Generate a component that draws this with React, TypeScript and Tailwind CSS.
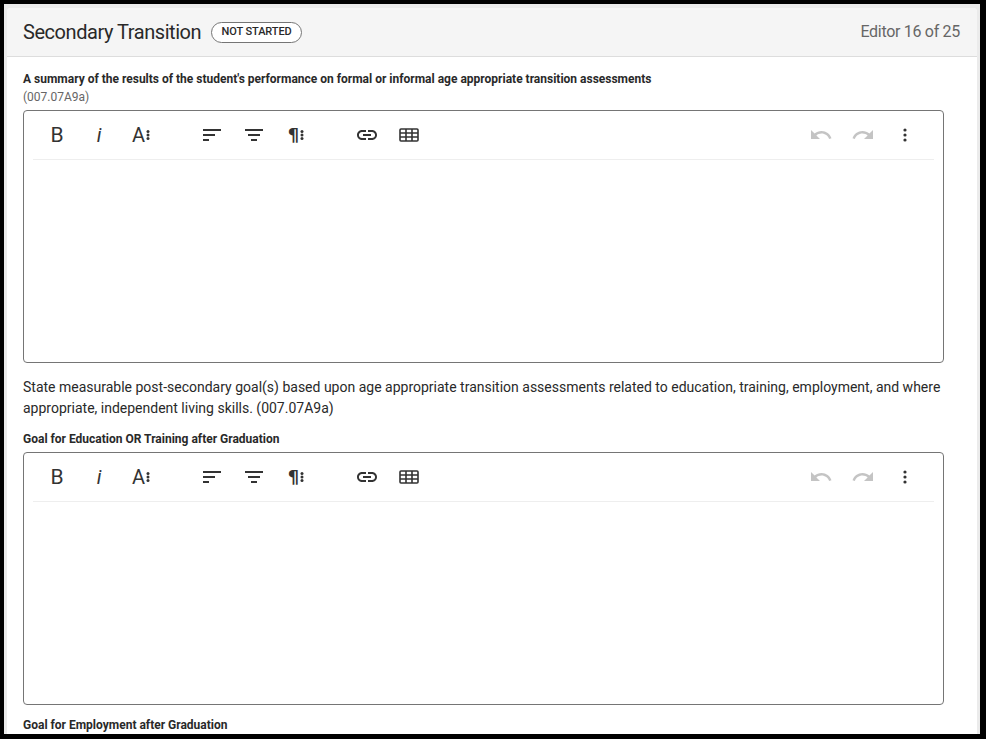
import type { ReactNode } from 'react';

function ToolButton({ children }: { children: ReactNode }) {
  return <div className="flex h-[42px] w-[42px] items-center justify-center text-[#333]">{children}</div>;
}

function Dots() {
  return (
    <svg width="4" height="12" viewBox="0 0 4 12" className="ml-[1px]" fill="currentColor">
      <circle cx="2" cy="2.5" r="1.5" />
      <circle cx="2" cy="6" r="1.5" />
      <circle cx="2" cy="9.5" r="1.5" />
    </svg>
  );
}

function Toolbar() {
  return (
    <div className="mx-[9px] flex h-[49px] items-center justify-between border-b border-[#eeeeee] pl-[3px] pr-[8px]">
      <div className="flex gap-[29px]">
        <div className="flex">
          <ToolButton>
            <span className="text-[21px] font-normal leading-none">B</span>
          </ToolButton>
          <ToolButton>
            <span className="text-[20px] italic leading-none">i</span>
          </ToolButton>
          <ToolButton>
            <span className="text-[20px] leading-none">A</span>
            <Dots />
          </ToolButton>
        </div>
        <div className="flex">
          <ToolButton>
            <svg width="20" height="14" viewBox="0 0 20 14" fill="currentColor">
              <rect x="1" y="1" width="18" height="2" />
              <rect x="1" y="6" width="12" height="2" />
              <rect x="1" y="11" width="6" height="2" />
            </svg>
          </ToolButton>
          <ToolButton>
            <svg width="20" height="14" viewBox="0 0 20 14" fill="currentColor">
              <rect x="1" y="1" width="18" height="2" />
              <rect x="4" y="6" width="12" height="2" />
              <rect x="7" y="11" width="6" height="2" />
            </svg>
          </ToolButton>
          <ToolButton>
            <span className="font-['DejaVu_Sans',sans-serif] text-[18px] font-bold leading-none">¶</span>
            <Dots />
          </ToolButton>
        </div>
        <div className="flex">
          <ToolButton>
            <svg width="24" height="24" viewBox="0 0 24 24" fill="currentColor">
              <path d="M3.9 12c0-1.71 1.39-3.1 3.1-3.1h4V7H7c-2.76 0-5 2.24-5 5s2.24 5 5 5h4v-1.9H7c-1.71 0-3.1-1.39-3.1-3.1zM8 13h8v-2H8v2zm9-6h-4v1.9h4c1.71 0 3.1 1.39 3.1 3.1s-1.39 3.1-3.1 3.1h-4V17h4c2.76 0 5-2.24 5-5s-2.24-5-5-5z" />
            </svg>
          </ToolButton>
          <ToolButton>
            <svg width="20" height="14" viewBox="0 0 20 14" fill="none" stroke="currentColor" strokeWidth="1.6">
              <rect x="1" y="1" width="18" height="12" rx="1" />
              <path d="M1 5h18M1 9h18M7 1v12M13 1v12" />
            </svg>
          </ToolButton>
        </div>
      </div>
      <div className="flex">
        <ToolButton>
          <svg width="24" height="24" viewBox="0 0 24 24" fill="#c4c4c4">
            <path d="M12.5 8c-2.65 0-5.05.99-6.9 2.6L2 7v9h9l-3.62-3.62c1.39-1.16 3.16-1.88 5.12-1.88 3.54 0 6.55 2.31 7.6 5.5l2.37-.78C21.08 11.03 17.15 8 12.5 8z" />
          </svg>
        </ToolButton>
        <ToolButton>
          <svg width="24" height="24" viewBox="0 0 24 24" fill="#c4c4c4">
            <path d="M18.4 10.6C16.55 8.99 14.15 8 11.5 8c-4.65 0-8.58 3.03-9.96 7.22L3.9 16c1.05-3.19 4.05-5.5 7.6-5.5 1.95 0 3.73.72 5.12 1.88L13 16h9V7l-3.6 3.6z" />
          </svg>
        </ToolButton>
        <ToolButton>
          <svg width="4" height="14" viewBox="0 0 4 14" fill="currentColor">
            <circle cx="2" cy="2" r="1.6" />
            <circle cx="2" cy="7" r="1.6" />
            <circle cx="2" cy="12" r="1.6" />
          </svg>
        </ToolButton>
      </div>
    </div>
  );
}

function Editor() {
  return (
    <div className="h-[253px] w-[921px] rounded border border-[#757575] bg-white">
      <Toolbar />
    </div>
  );
}

export default function App() {
  return (
    <div className="h-[743px] w-[989px] overflow-hidden bg-white font-['Roboto',sans-serif] text-[#292929]">
      <div className="h-[739px] w-[986px] border-b-[5px] border-l-[4px] border-r-[6px] border-t-[4px] border-black bg-[#ebebeb] pl-[3px] pr-[3px] pt-[4px]">
        <div className="h-full overflow-hidden rounded-t bg-white">
          <div className="flex h-[49px] items-center justify-between border-b border-[#dddddd] bg-[#f5f5f5] pl-[16px] pr-[17px]">
            <div className="flex items-center gap-[10px]">
              <h1 className="text-[20px] font-normal leading-none tracking-[-0.45px]">Secondary Transition</h1>
              <span className="flex h-[21px] w-[91px] items-center justify-center rounded-full border border-[#757575] bg-white text-[11px] font-medium tracking-[-0.1px]">
                NOT STARTED
              </span>
            </div>
            <span className="text-[16px] tracking-[-0.3px] text-[#666666]">Editor 16 of 25</span>
          </div>
          <div className="px-[16px] pt-[13px]">
            <p className="text-[12px] font-bold leading-[18px]">
              A summary of the results of the student's performance on formal or informal age appropriate transition assessments
            </p>
            <p className="mb-[4px] text-[12px] leading-[18px] text-[#666666]">(007.07A9a)</p>
            <Editor />
            <p className="mt-[14px] w-[925px] text-[14px] leading-[21px]">
              State measurable post-secondary goal(s) based upon age appropriate transition assessments related to education, training, employment, and where appropriate, independent living skills. (007.07A9a)
            </p>
            <p className="mb-[4px] mt-[11px] text-[12px] font-bold leading-[18px]">Goal for Education OR Training after Graduation</p>
            <Editor />
            <p className="mt-[11px] text-[12px] font-bold leading-[18px]">Goal for Employment after Graduation</p>
          </div>
        </div>
      </div>
    </div>
  );
}
